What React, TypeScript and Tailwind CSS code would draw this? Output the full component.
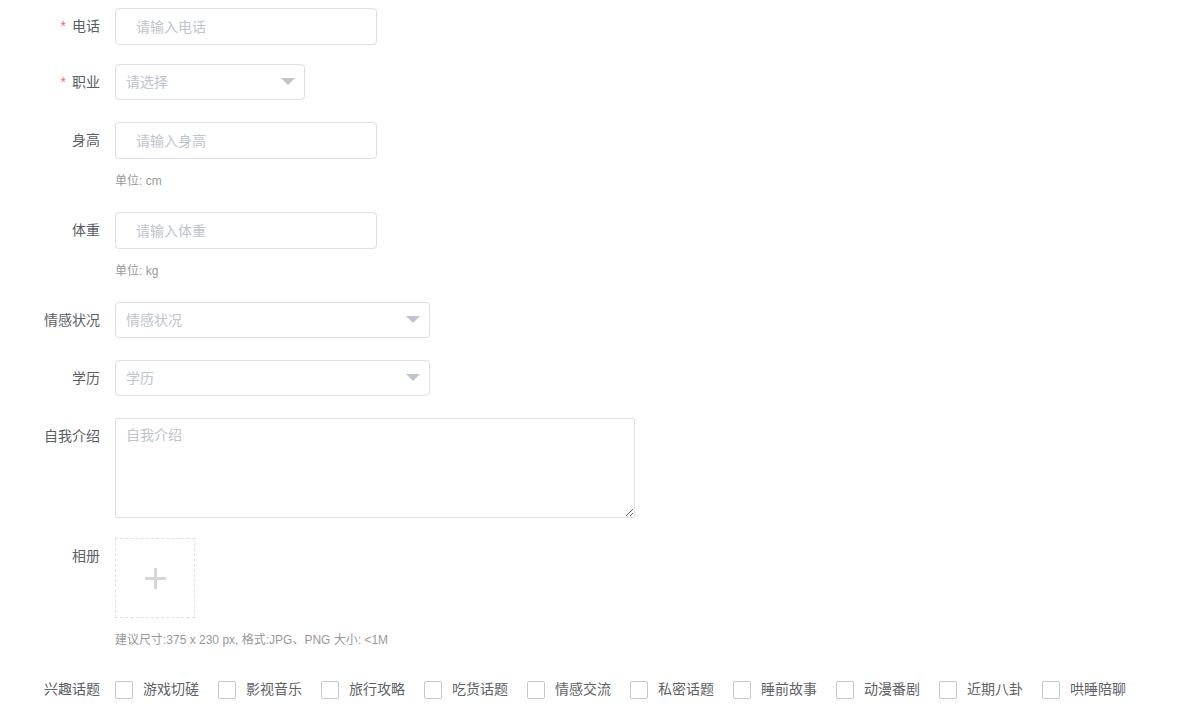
import { ReactNode } from "react";

const TOPICS = ["游戏切磋", "影视音乐", "旅行攻略", "吃货话题", "情感交流", "私密话题", "睡前故事", "动漫番剧", "近期八卦", "哄睡陪聊"];

function Row({ label, required, children, top }: { label: string; required?: boolean; children: ReactNode; top?: boolean }) {
    return (
        <div className={`flex ${top ? "items-start" : "items-center"}`}>
            <label className={`w-[100px] shrink-0 text-right text-[14px] text-[#5a5e66] ${top ? "leading-[36px]" : ""}`}>
                {required && <span className="mr-[6px] text-[#f56c6c]">*</span>}
                {label}
            </label>
            <div className="ml-[15px]">{children}</div>
        </div>
    );
}

function TextInput({ placeholder }: { placeholder: string }) {
    return (
        <input
            placeholder={placeholder}
            className="h-[37px] w-[262px] rounded-[4px] border border-[#dcdfe6] bg-white px-[20px] text-[14px] outline-none placeholder:text-[#c0c4cc]"
        />
    );
}

function Select({ placeholder, width }: { placeholder: string; width: string }) {
    return (
        <div className={`flex h-[36px] items-center justify-between rounded-[4px] border border-[#dcdfe6] bg-white pl-[10px] pr-[9px] ${width}`}>
            <span className="text-[14px] text-[#c0c4cc]">{placeholder}</span>
            <svg width="14" height="8" viewBox="0 0 14 8">
                <path d="M0 0 L14 0 L7 7 Z" fill="#c0c4cc" />
            </svg>
        </div>
    );
}

export default function App() {
    return (
        <div
            className="min-h-screen bg-white pt-[8px]"
            style={{ fontFamily: '"Liberation Sans", "Noto Sans CJK SC", sans-serif' }}
        >
            <div className="flex flex-col">
                <Row label="电话" required>
                    <TextInput placeholder="请输入电话" />
                </Row>

                <div className="mt-[19px]">
                    <Row label="职业" required>
                        <Select placeholder="请选择" width="w-[190px]" />
                    </Row>
                </div>

                <div className="mt-[22px]">
                    <Row label="身高">
                        <TextInput placeholder="请输入身高" />
                    </Row>
                    <p className="ml-[115px] mt-[13px] text-[12px] text-[#999]">单位: cm</p>
                </div>

                <div className="mt-[22px]">
                    <Row label="体重">
                        <TextInput placeholder="请输入体重" />
                    </Row>
                    <p className="ml-[115px] mt-[13px] text-[12px] text-[#999]">单位: kg</p>
                </div>

                <div className="mt-[22px]">
                    <Row label="情感状况">
                        <Select placeholder="情感状况" width="w-[315px]" />
                    </Row>
                </div>

                <div className="mt-[22px]">
                    <Row label="学历">
                        <Select placeholder="学历" width="w-[315px]" />
                    </Row>
                </div>

                <div className="mt-[22px]">
                    <Row label="自我介绍" top>
                        <textarea
                            placeholder="自我介绍"
                            className="block h-[100px] w-[520px] rounded-[2px] border border-[#dcdfe6] px-[10px] py-[6px] text-[14px] outline-none placeholder:text-[#c0c4cc]"
                        />
                    </Row>
                </div>

                <div className="mt-[20px]">
                    <Row label="相册" top>
                        <div className="flex h-[80px] w-[80px] items-center justify-center border border-dashed border-[#e0e0e0]">
                            <svg width="21" height="21" viewBox="0 0 21 21">
                                <rect x="9" y="0" width="3" height="21" fill="#d6d6d6" />
                                <rect x="0" y="9" width="21" height="3" fill="#d6d6d6" />
                            </svg>
                        </div>
                    </Row>
                    <p className="ml-[115px] mt-[13px] text-[12px] text-[#999]">建议尺寸:375 x 230 px, 格式:JPG、PNG 大小: &lt;1M</p>
                </div>

                <div className="mt-[30px]">
                    <Row label="兴趣话题">
                        <div className="flex items-center">
                            {TOPICS.map((t) => (
                                <label key={t} className="mr-[19px] flex items-center">
                                    <span className="h-[18px] w-[18px] rounded-[2px] border border-[#c8c8c8] bg-white" />
                                    <span className="ml-[10px] text-[14px] text-[#606266]">{t}</span>
                                </label>
                            ))}
                        </div>
                    </Row>
                </div>
            </div>
        </div>
    );
}
